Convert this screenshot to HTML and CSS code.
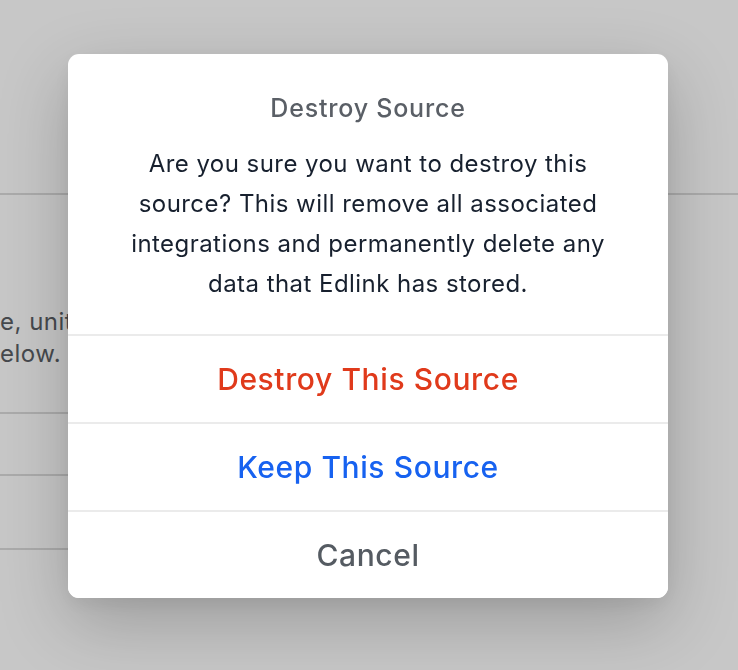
FILE: index.html
```html
<!DOCTYPE html>
<html>
<head>
<meta charset="utf-8">
<link rel="stylesheet" href="styles.css">
</head>
<body>
<div class="page">
  <div class="page-header"></div>
  <div class="page-content">
    <div class="intro">
      <p>e, unit</p>
      <p>elow.</p>
    </div>
    <div class="row"></div>
    <div class="row short"></div>
  </div>
</div>
<div class="overlay"></div>
<div class="modal">
  <div class="modal-head">
    <div class="modal-title">Destroy Source</div>
    <div class="modal-text">Are you sure you want to destroy this source? This will remove all associated integrations and permanently delete any data that Edlink has stored.</div>
  </div>
  <button class="action danger">Destroy This Source</button>
  <button class="action primary">Keep This Source</button>
  <button class="action muted">Cancel</button>
</div>
</body>
</html>
```
FILE: styles.css
```css
* { box-sizing: border-box; }
html, body { margin: 0; height: 100%; }
body {
  font-family: Inter, "Noto Sans", sans-serif;
  background: #ffffff;
  overflow: hidden;
}
.page { width: 738px; height: 670px; }
.page-header {
  height: 195px;
  border-bottom: 2px solid #dcdcdc;
}
.page-content { width: 120px; }
.intro {
  padding: 111px 0 42px 0;
  font-size: 24px;
  line-height: 32px;
  color: #5a5e64;
  letter-spacing: 0.5px;
}
.intro p { margin: 0; white-space: nowrap; }
.row { height: 62px; border-top: 2px solid #dcdcdc; }
.row.short { height: 76px; border-bottom: 2px solid #dcdcdc; }
.overlay {
  position: fixed;
  inset: 0;
  background: rgba(0, 0, 0, 0.22);
}
.modal {
  position: absolute;
  left: 68px;
  top: 54px;
  width: 600px;
  background: #fff;
  border-radius: 11px;
  box-shadow: 0 24px 70px rgba(0, 0, 0, 0.22), 0 6px 20px rgba(0, 0, 0, 0.06);
  display: flex;
  flex-direction: column;
  overflow: hidden;
}
.modal-head {
  padding: 38px 48px 30px;
  text-align: center;
  border-bottom: 2px solid #ebebeb;
}
.modal-title {
  font-size: 25px;
  line-height: 32px;
  font-weight: 500;
  color: #5a5f66;
  letter-spacing: 0.8px;
}
.modal-text {
  margin-top: 20px;
  font-size: 24px;
  line-height: 40px;
  color: #17202e;
  letter-spacing: 0.45px;
}
.action {
  display: block;
  width: 100%;
  height: 88px;
  border: 0;
  border-bottom: 2px solid #ebebeb;
  background: #fff;
  font-family: inherit;
  font-size: 30px;
  font-weight: 500;
  letter-spacing: 0.6px;
  cursor: pointer;
}
.action:last-child { border-bottom: 0; height: 86px; }
.danger { color: #e03a1b; }
.primary { color: #1762f0; }
.muted { color: #555b62; }
```
